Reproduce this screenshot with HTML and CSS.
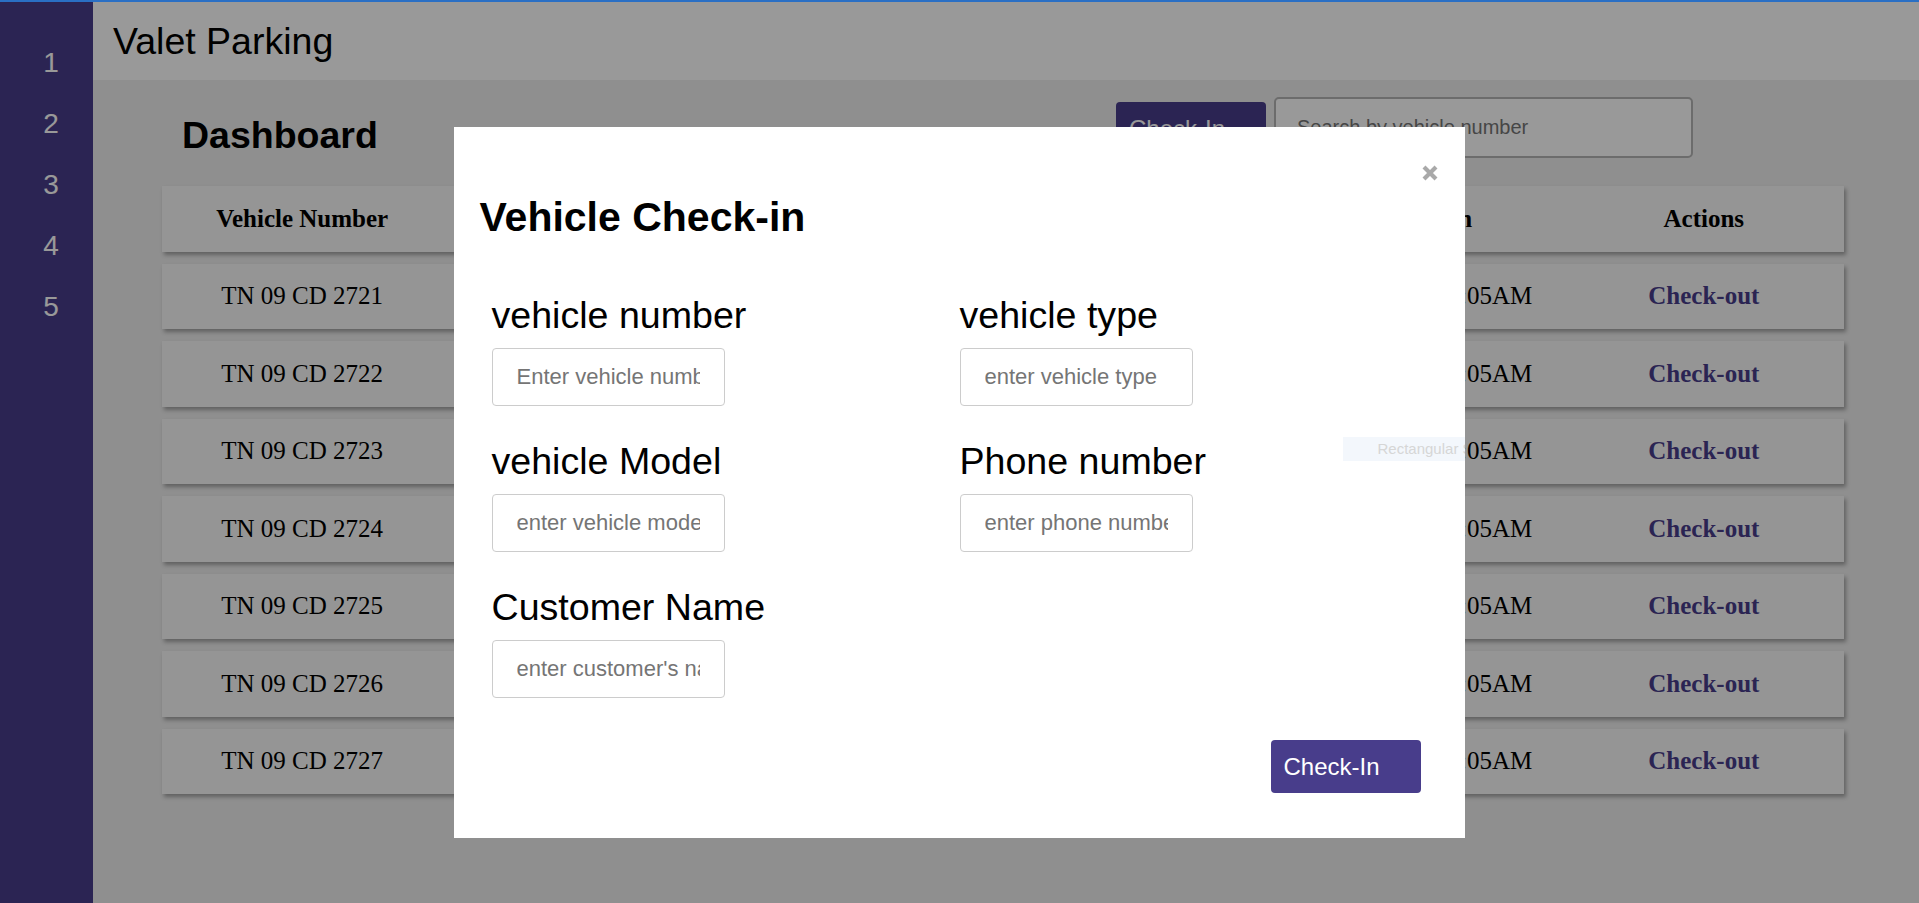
FILE: index.html
```html
<!DOCTYPE html>
<html lang="en">
<head>
<meta charset="utf-8">
<title>Valet Parking</title>
<link rel="stylesheet" href="styles.css">
</head>
<body>
<div class="app">
  <nav class="sidebar">
    <ul class="nav-list">
      <li>1</li>
      <li>2</li>
      <li>3</li>
      <li>4</li>
      <li>5</li>
    </ul>
  </nav>
  <div class="main">
    <header class="topbar"><span class="brand">Valet Parking</span></header>
    <section class="content">
      <div class="toolbar">
        <h1 class="page-title">Dashboard</h1>
        <div class="toolbar-actions">
          <button class="btn-primary btn-offset" type="button">Check-In</button>
          <input class="search" type="text" placeholder="Search by vehicle number">
        </div>
      </div>
      <div class="table">
        <div class="row head">
          <div class="cell">Vehicle Number</div>
          <div class="cell">Vehicle Type</div>
          <div class="cell">Customer Name</div>
          <div class="cell">Phone Number</div>
          <div class="cell">Check-in</div>
          <div class="cell">Actions</div>
        </div>
        <div class="row">
          <div class="cell">TN 09 CD 2721</div><div class="cell">Car</div><div class="cell">Arun</div><div class="cell">9876543210</div><div class="cell">12/03/2023 10:05AM</div><div class="cell"><a class="action">Check-out</a></div>
        </div>
        <div class="row">
          <div class="cell">TN 09 CD 2722</div><div class="cell">Car</div><div class="cell">Bala</div><div class="cell">9876543211</div><div class="cell">12/03/2023 10:05AM</div><div class="cell"><a class="action">Check-out</a></div>
        </div>
        <div class="row">
          <div class="cell">TN 09 CD 2723</div><div class="cell">Car</div><div class="cell">Charan</div><div class="cell">9876543212</div><div class="cell">12/03/2023 10:05AM</div><div class="cell"><a class="action">Check-out</a></div>
        </div>
        <div class="row">
          <div class="cell">TN 09 CD 2724</div><div class="cell">Car</div><div class="cell">Dinesh</div><div class="cell">9876543213</div><div class="cell">12/03/2023 10:05AM</div><div class="cell"><a class="action">Check-out</a></div>
        </div>
        <div class="row">
          <div class="cell">TN 09 CD 2725</div><div class="cell">Car</div><div class="cell">Esakki</div><div class="cell">9876543214</div><div class="cell">12/03/2023 10:05AM</div><div class="cell"><a class="action">Check-out</a></div>
        </div>
        <div class="row">
          <div class="cell">TN 09 CD 2726</div><div class="cell">Car</div><div class="cell">Farook</div><div class="cell">9876543215</div><div class="cell">12/03/2023 10:05AM</div><div class="cell"><a class="action">Check-out</a></div>
        </div>
        <div class="row">
          <div class="cell">TN 09 CD 2727</div><div class="cell">Car</div><div class="cell">Gokul</div><div class="cell">9876543216</div><div class="cell">12/03/2023 10:05AM</div><div class="cell"><a class="action">Check-out</a></div>
        </div>
      </div>
    </section>
  </div>
</div>

<div class="overlay">
  <div class="modal">
    <button class="close" type="button" aria-label="Close">
      <svg width="16" height="16" viewBox="0 0 16 16"><path d="M2 2 L14 14 M14 2 L2 14" stroke="#a9a9a9" stroke-width="4.2" stroke-linecap="butt"/></svg>
    </button>
    <h2 class="modal-title">Vehicle Check-in</h2>
    <form class="form-grid">
      <div class="field">
        <label class="field-label">vehicle number</label>
        <input class="field-input" type="text" placeholder="Enter vehicle number">
      </div>
      <div class="field">
        <label class="field-label">vehicle type</label>
        <input class="field-input" type="text" placeholder="enter vehicle type">
      </div>
      <div class="field">
        <label class="field-label">vehicle Model</label>
        <input class="field-input" type="text" placeholder="enter vehicle model">
      </div>
      <div class="field">
        <label class="field-label">Phone number</label>
        <input class="field-input" type="text" placeholder="enter phone number">
      </div>
      <div class="field">
        <label class="field-label">Customer Name</label>
        <input class="field-input" type="text" placeholder="enter customer's name">
      </div>
    </form>
    <div class="modal-footer">
      <button class="btn-primary" type="button">Check-In</button>
    </div>
    <div class="snip-tip">Rectangular S</div>
  </div>
</div>
<div class="topline"></div>
</body>
</html>
```

FILE: styles.css
```css
* {
  box-sizing: border-box;
}

html, body {
  margin: 0;
  padding: 0;
  height: 100%;
}

body {
  font-family: "Liberation Sans", Arial, sans-serif;
  color: #000;
  overflow: hidden;
}

.topline {
  position: fixed;
  top: 0;
  left: 0;
  right: 0;
  height: 2px;
  background: #2a6fc4;
  z-index: 20;
}

.app {
  display: flex;
  height: 903px;
  padding-top: 2px;
  background: #eeeeee;
}

.sidebar {
  width: 93px;
  flex: 0 0 93px;
  background: #483d8b;
  color: #ffffff;
}

.nav-list {
  list-style: none;
  margin: 0;
  padding: 30px 0 0 9px;
}

.nav-list li {
  font-size: 28px;
  line-height: 61px;
  text-align: center;
}

.main {
  flex: 1;
  display: flex;
  flex-direction: column;
  background: #eeeeee;
}

.topbar {
  height: 78px;
  background: #ffffff;
  padding: 19px 0 0 20px;
}

.brand {
  font-size: 37.5px;
  line-height: 41px;
}

.toolbar {
  display: flex;
  align-items: flex-start;
  height: 106px;
}

.page-title {
  margin: 34px 0 0 89px;
  font-size: 37.5px;
  line-height: 42px;
  font-weight: bold;
}

.toolbar-actions {
  display: flex;
  align-items: flex-start;
  gap: 8px;
  margin: 17px 226px 0 auto;
}

.btn-offset {
  margin-top: 5px;
}

.btn-primary {
  width: 150px;
  height: 53px;
  background: #483d8b;
  color: #ffffff;
  border: none;
  border-radius: 4px;
  font-family: "Liberation Sans", Arial, sans-serif;
  font-size: 24px;
  text-align: left;
  padding: 0 0 0 13px;
}

.search {
  width: 419px;
  height: 61px;
  border: 2px solid #b4b4b4;
  border-radius: 5px;
  background: #ffffff;
  padding: 0 0 0 21px;
  font-family: "Liberation Sans", Arial, sans-serif;
  font-size: 20px;
}

.search::placeholder {
  color: #757575;
}

.table {
  margin-left: 69px;
  width: 1682px;
  display: flex;
  flex-direction: column;
  gap: 12px;
}

.row {
  display: grid;
  grid-template-columns: repeat(6, 1fr);
  height: 65.5px;
  background: #f8f8f8;
  box-shadow: 2px 3px 4px rgba(0, 0, 0, 0.32);
  font-family: "Liberation Serif", "Times New Roman", serif;
  font-size: 25px;
}

.row.head {
  font-weight: bold;
}

.cell {
  display: flex;
  align-items: center;
  justify-content: center;
  white-space: nowrap;
}

.action {
  color: #483d8b;
  font-weight: bold;
}

.overlay {
  position: fixed;
  inset: 0;
  background: rgba(0, 0, 0, 0.4);
  display: flex;
  justify-content: center;
  align-items: flex-start;
  padding-top: 127px;
  z-index: 10;
}

.modal {
  position: relative;
  width: 1011px;
  height: 711px;
  margin-left: -1px;
  background: #ffffff;
  overflow: hidden;
  padding-top: 67px;
}

.close {
  position: absolute;
  top: 38px;
  right: 27px;
  width: 16px;
  height: 16px;
  padding: 0;
  border: none;
  background: none;
  display: flex;
}

.modal-title {
  margin: 0;
  padding-left: 26px;
  font-size: 41px;
  line-height: 47px;
  font-weight: bold;
}

.form-grid {
  display: grid;
  grid-template-columns: 468px 468px;
  row-gap: 34px;
  margin: 53px 0 0 0;
  padding-left: 38px;
}

.field {
  display: flex;
  flex-direction: column;
  align-items: flex-start;
}

.field-label {
  font-size: 37.6px;
  line-height: 43px;
  margin-bottom: 11px;
}

.field-input {
  width: 233px;
  height: 58px;
  border: 1px solid #cccccc;
  border-radius: 4px;
  padding: 0 24px;
  font-family: "Liberation Sans", Arial, sans-serif;
  font-size: 22px;
  background: #ffffff;
}

.field-input::placeholder {
  color: #757575;
}

.modal-footer {
  display: flex;
  justify-content: flex-end;
  margin-top: 42px;
  padding-right: 44px;
}

.snip-tip {
  position: absolute;
  left: 889px;
  top: 310px;
  width: 200px;
  height: 24px;
  background: #f3f7fc;
  color: #d6d6d6;
  font-size: 15px;
  line-height: 24px;
  padding-left: 35px;
  white-space: nowrap;
}
```
